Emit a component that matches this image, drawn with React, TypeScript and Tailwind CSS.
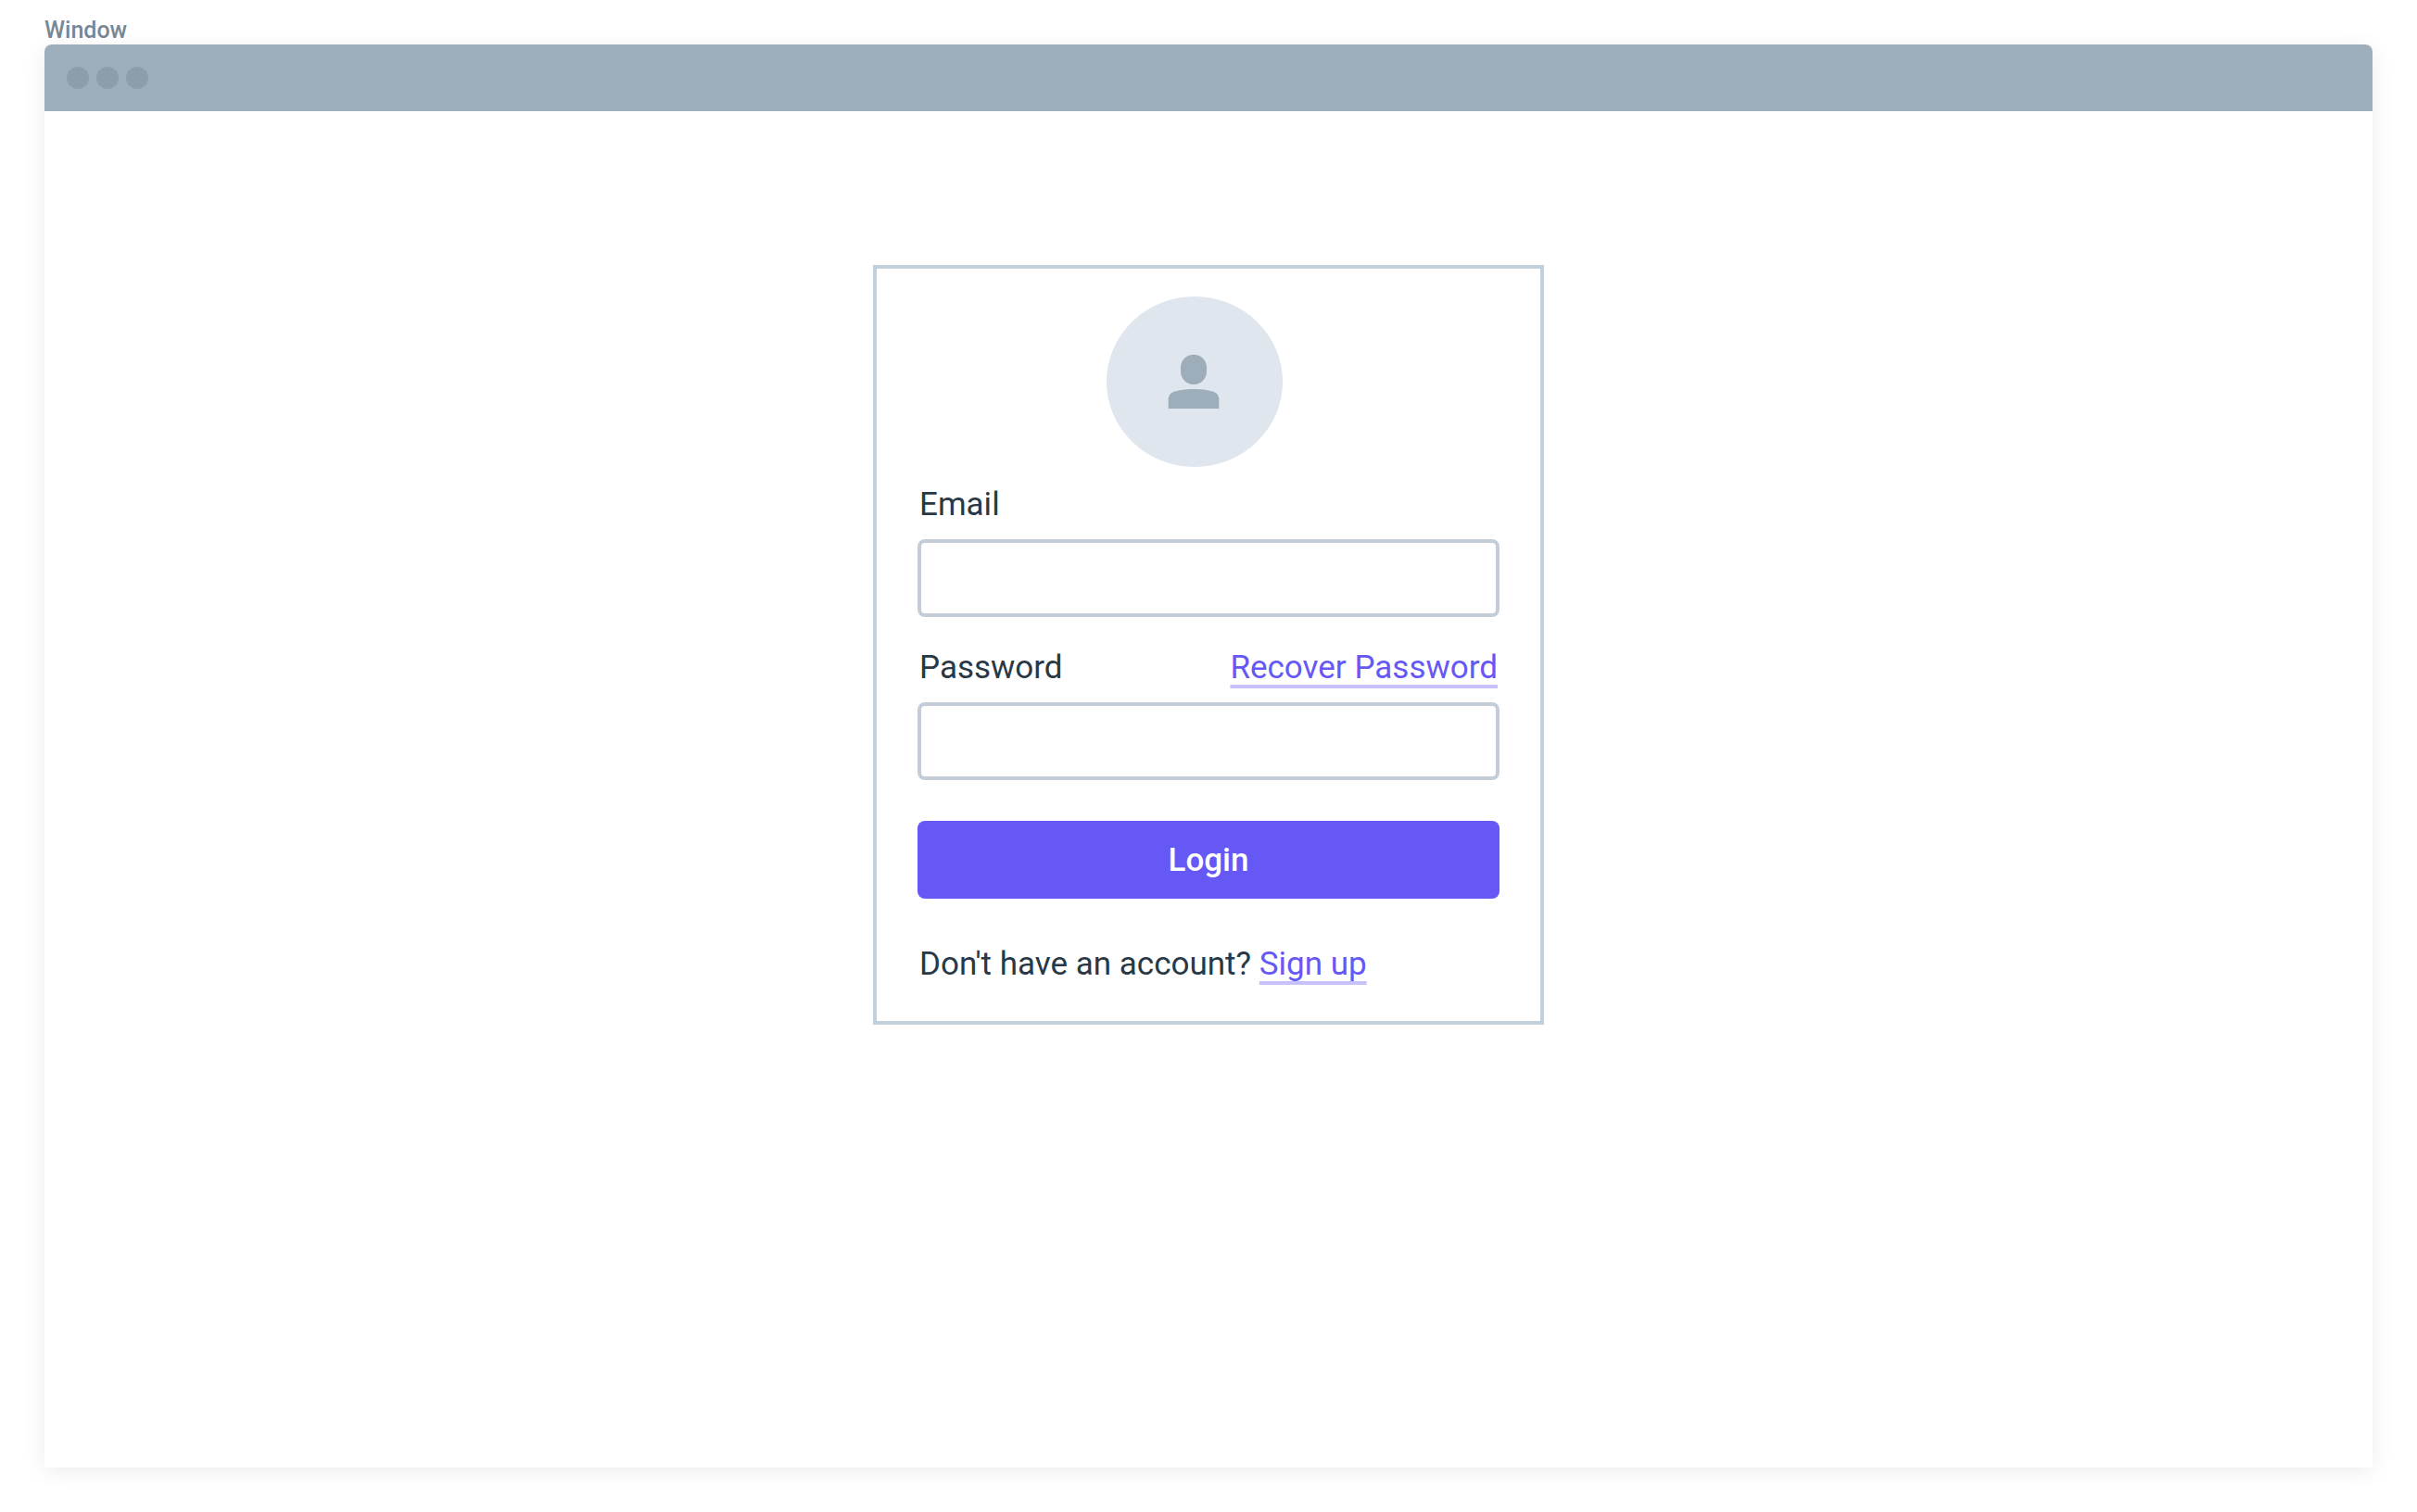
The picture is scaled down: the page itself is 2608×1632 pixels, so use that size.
import React from "react";

const linkClass =
  "text-[#6558f5] underline decoration-[#c7c2fb] decoration-4 underline-offset-[7px] [text-decoration-skip-ink:none]";

const fieldClass =
  "h-21 w-full rounded-lg border-4 border-[#c4cdd7] bg-transparent px-5 outline-none focus:border-[#6558f5]";

function Avatar() {
  return (
    <svg className="mr-[30px] h-46 w-[190px]" viewBox="0 0 190 184" role="img" aria-label="User">
      <ellipse cx="95" cy="92" rx="95" ry="92" fill="#dfe6ee" />
      <rect x="80" y="62.7" width="28" height="32.3" rx="14" ry="14" fill="#9dadb9" />
      <path
        d="M66.700 121V111C66.700 107 68.800 104.300 73.500 102.600C79 100.800 86.500 100 94 100C101.500 100 109 100.800 114.500 102.600C119.200 104.300 121.300 107 121.300 111V121Z"
        fill="#9dadb9"
      />
    </svg>
  );
}

function LoginCard() {
  return (
    <form
      className="flex w-full max-w-[724px] flex-col border-4 border-[#c2d0db] px-11 pt-[30px] pb-[38px] text-[35px] leading-[46px] text-[#293845]"
      onSubmit={(e) => e.preventDefault()}
    >
      <div className="mb-[18px] flex justify-center">
        <Avatar />
      </div>

      <label htmlFor="email" className="mb-3.5 px-0.5">
        Email
      </label>
      <input id="email" type="email" className={fieldClass} />

      <div className="mt-8 mb-3.5 flex justify-between px-0.5">
        <label htmlFor="password">Password</label>
        <a href="#recover" className={linkClass}>
          Recover Password
        </a>
      </div>
      <input id="password" type="password" className={fieldClass} />

      <button type="submit" className="mt-11 h-21 w-full rounded-lg bg-[#6558f5] pt-0.5 font-medium text-white">
        Login
      </button>

      <p className="mt-12 px-0.5">
        Don't have an account?{" "}
        <a href="#signup" className={linkClass}>
          Sign up
        </a>
      </p>
    </form>
  );
}

export default function App() {
  return (
    <div className="flex min-h-screen flex-col bg-white px-12 pt-[18px] pb-12 font-['Roboto',sans-serif]">
      <h1 className="text-[25px] leading-[30px] font-medium text-[#788896]">Window</h1>
      <main className="flex flex-1 flex-col rounded-t-lg bg-white shadow-[0_4px_24px_rgba(0,0,0,0.08)]">
        <div className="flex h-18 items-center gap-2 rounded-t-lg bg-[#9dadb9] px-6">
          <span className="size-6 rounded-full bg-[#8d9dab]" />
          <span className="size-6 rounded-full bg-[#8d9dab]" />
          <span className="size-6 rounded-full bg-[#8d9dab]" />
        </div>
        <div className="flex justify-center px-6 pt-[166px] pb-12">
          <LoginCard />
        </div>
      </main>
    </div>
  );
}
